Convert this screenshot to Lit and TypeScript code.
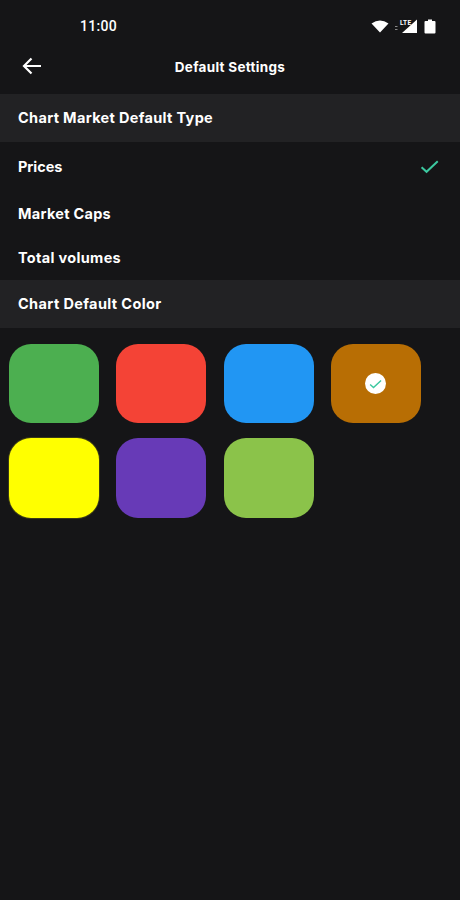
import { LitElement, html, css, svg } from "lit";
import { customElement } from "lit/decorators.js";

const COLORS = ["#4caf50", "#f44336", "#2196f3", "#b86e04", "#ffff00", "#673ab7", "#8bc34a"];

@customElement("app-root")
export class AppRoot extends LitElement {
  static styles = css`
    :host { display: block; width: 460px; height: 900px; background: #151517; color: #fff;
      font-family: Inter, "Liberation Sans", sans-serif; overflow: hidden; }
    .status { height: 40px; display: flex; align-items: center; justify-content: space-between;
      padding: 12px 24px 0 80px; box-sizing: border-box; font-family: Roboto, sans-serif; font-size: 14px; font-weight: 500;
      letter-spacing: 0.3px; }
    .status-icons { display: flex; align-items: center; gap: 5px; }
    .status svg { display: block; }
    .wifi { margin-right: 1px; }
    .toolbar { height: 54px; display: flex; align-items: center; position: relative; }
    .back { position: absolute; left: 21px; top: 15px; }
    .title { flex: 1; text-align: center; font-size: 13.5px; font-weight: 700; letter-spacing: 0.3px; padding-bottom: 1px; }
    .section { height: 48px; background: #222224; display: flex; align-items: center; padding: 0 18px 2px;
      box-sizing: border-box; font-size: 14.5px; font-weight: 700; letter-spacing: 0.33px; }
    .section.short { letter-spacing: 0.38px; }
    .row { display: flex; align-items: center; justify-content: space-between; padding: 0 21px 0 18px;
      font-size: 14.5px; font-weight: 700; }
    .r1 { height: 48px; letter-spacing: -0.05px; }
    .r2 { height: 46px; letter-spacing: 0.28px; }
    .r3 { height: 44px; letter-spacing: 0.32px; padding-bottom: 2px; box-sizing: border-box; }
    .swatches { display: grid; grid-template-columns: repeat(4, 90px); column-gap: 17.3px; row-gap: 15px;
      padding: 16px 9px; }
    .swatch { height: 79px; border-radius: 22px; display: flex; align-items: center; justify-content: center; }
    .swatch.tall { height: 80px; }
    .swatch.yellow { box-shadow: 0 0 0 1px rgba(90, 90, 20, 0.55); }
    .tick { width: 21px; height: 21px; border-radius: 50%; background: #fff; display: flex;
      align-items: center; justify-content: center; }
  `;

  private check(w: number, h: number, sw: number) {
    return html`<svg width=${w} height=${h} viewBox="0 0 18 14" fill="none">
      ${svg`<path d="M1.5 7.8 L6.2 12 L16.8 2" stroke="#3cc8a0" stroke-width=${sw} stroke-linecap="butt" stroke-linejoin="miter"/>`}
    </svg>`;
  }

  render() {
    return html`
      <div class="status">
        <span>11:00</span>
        <div class="status-icons">
          <svg class="wifi" width="18" height="14" viewBox="0 0 18 14"><path d="M0.5 4.5 Q9 -1.5 17.5 4.5 L9 13.5 Z" fill="#fff"/></svg>
          <svg width="24" height="16" viewBox="0 0 24 16">
            <rect x="0" y="8" width="2.5" height="1" fill="#888"/>
            <rect x="0" y="11" width="2.5" height="1" fill="#888"/>
            <path d="M22 1.5 V15 H7 Z" fill="#fff"/>
            <rect x="4" y="0.5" width="11" height="7" fill="#151517"/>
            <text x="5" y="6.5" font-size="6.5" font-weight="700" fill="#fff" font-family="Roboto, sans-serif">LTE</text>
          </svg>
          <svg width="12" height="15" viewBox="0 0 12 15"><path d="M4 0.5 H8 V2 H10.5 A1 1 0 0 1 11.5 3 V13.5 A1 1 0 0 1 10.5 14.5 H1.5 A1 1 0 0 1 0.5 13.5 V3 A1 1 0 0 1 1.5 2 H4 Z" fill="#fff"/></svg>
        </div>
      </div>
      <div class="toolbar">
        <svg class="back" width="22" height="22" viewBox="0 0 22 22" fill="none">
          <path d="M20 11 H3.5 M10.5 3.5 L3 11 L10.5 18.5" stroke="#fff" stroke-width="2.2"/>
        </svg>
        <div class="title">Default Settings</div>
      </div>
      <div class="section">Chart Market Default Type</div>
      <div class="row r1"><span>Prices</span>${this.check(19, 15, 1.9)}</div>
      <div class="row r2"><span>Market Caps</span></div>
      <div class="row r3"><span>Total volumes</span></div>
      <div class="section short">Chart Default Color</div>
      <div class="swatches">
        ${COLORS.map((c, i) => html`<div class="swatch ${i >= 4 ? "tall" : ""} ${i === 4 ? "yellow" : ""}" style="background:${c}">
          ${i === 3 ? html`<div class="tick">${this.check(13, 10, 2)}</div>` : ""}
        </div>`)}
      </div>
    `;
  }
}
